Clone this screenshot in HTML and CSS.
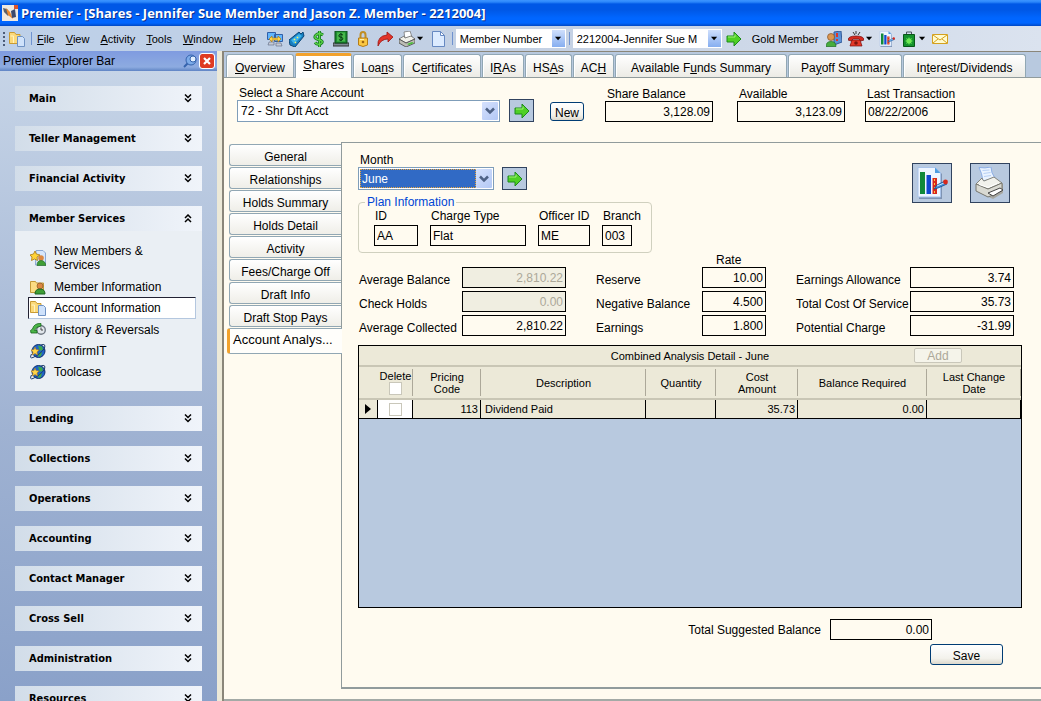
FILE: index.html
```html
<!DOCTYPE html>
<html lang="en">
<head>
    <meta charset="UTF-8">
    <meta name="viewport" content="width=device-width, initial-scale=1.0">
    <title>Premier - [Shares - Jennifer Sue Member and Jason Z. Member - 2212004]</title>
    <link rel="stylesheet" href="styles.css">
</head>
<body>
    <!-- Shared icons -->
    <svg class="defs" width="0" height="0">
        <symbol id="i-arrow" viewBox="0 0 16 16"><path d="M1 5h7V1l7 7-7 7v-4H1z" fill="#4fd024" stroke="#1d8a1a"/><path d="M2 6h7V3.500" fill="none" stroke="#a2f078"/></symbol>
        <symbol id="i-down" viewBox="0 0 8 8"><path d="M0 2h7L3.500 6z"/></symbol>
        <symbol id="i-chev" viewBox="0 0 10 8"><path d="M1 1.500L5 5.500L9 1.500" fill="none" stroke="#4d6185" stroke-width="2.500"/></symbol>
        <symbol id="i-expand" viewBox="0 0 8 9"><path d="M1 .5L4 3.500L7 .5M1 4.500L4 7.500L7 4.500" fill="none" stroke="#000" stroke-width="1.500"/></symbol>
        <symbol id="i-collapse" viewBox="0 0 8 9"><path d="M1 4L4 1L7 4M1 8L4 5L7 8" fill="none" stroke="#000" stroke-width="1.500"/></symbol>
        <symbol id="i-folder" viewBox="0 0 16 16"><path d="M.5 12.500v-11h5l1.500 2h4v9z" fill="#fbd979" stroke="#c99b33"/><path d="M1.500 5h3v7" fill="none" stroke="#fff3c0"/><path d="M8.500 5.500h5l2 2v8h-7z" fill="#cfe2fb" stroke="#6f92c4"/></symbol>
        <symbol id="i-person" viewBox="0 0 16 16"><path d="M.5 13.500v-11h5l1 1.500h7v9.500z" fill="#fbdc83" stroke="#c39a38"/><circle cx="10" cy="7" r="3" fill="#dc8741" stroke="#7b4a20" stroke-width=".6"/><path d="M5 15q0-5 5-5t5 5z" fill="#3f9e36" stroke="#1d6420"/></symbol>
        <symbol id="i-star-person" viewBox="0 0 16 16"><path d="M6 .5h7l2.500 2.500v12H5.500z" fill="#d7e6fb" stroke="#8aa7d4"/><circle cx="11" cy="8" r="2.800" fill="#dc8741"/><path d="M7 15.500q0-5 4-5t5 5z" fill="#3f9e36" stroke="#1d6420" stroke-width=".6"/><path d="M5 1l1.300 3L10 5 7 7l.5 3.500L4.500 9 1.500 10.500 2 7-.2 5 3.500 4z" fill="#ffd338" stroke="#a87713" stroke-width=".8"/></symbol>
        <symbol id="i-history" viewBox="0 0 16 16"><circle cx="11" cy="8" r="4.300" fill="#e1e6eb" stroke="#727a85" stroke-width="1.400"/><path d="M11 5.500V8h2" fill="none" stroke="#444"/><path d="M1 11h6V8.500H4.500Q6 4.500 11 4V1.500Q4 1 2.500 7L.5 8.500z" fill="#4bb447" stroke="#17681d" stroke-width=".8"/></symbol>
        <symbol id="i-globe" viewBox="0 0 16 16"><circle cx="8.500" cy="8" r="6.500" fill="#1f63c8" stroke="#0e2f6e"/><path d="M8 2.500l4 1 1 3-3 1.500-1-2zM9 10l3-1-1 4-3 1z" fill="#3faa49"/><path d="M11 2q5-2 3.500 3Q11 11 3 14.500Q-1 16 1.500 11" fill="none" stroke="#1b3c6b"/><path d="M5 4l1 2.500 3 .5-2 2 .5 3L5 10.500 2.500 12 3 9 1 7l3-.5z" fill="#ffd447" stroke="#a9781c" stroke-width=".6"/></symbol>
        <symbol id="i-chart" viewBox="0 0 32 32"><path d="M3 1h17l6 6v25H3z" fill="#7e93b3"/><path d="M2 .5h17.500l5 5V30H2z" fill="#eef5ff" stroke="#a9c3ea"/><path d="M19 .5v5.500h5.500z" fill="#4e9be0"/><path d="M4 5h5v22H4z" fill="#11893a"/><path d="M10.500 8h4.500v19h-4.500z" fill="#1148d0"/><path d="M16.500 11h4.500v16h-4.500z" fill="#d8281b"/><path d="M18.500 12v15" stroke="#ffc244" stroke-dasharray="2 2"/><path d="M18 22l3-4 8-4 2 3-9 4z" fill="#3d8fdd" stroke="#184b8c" stroke-width=".8"/><path d="M21 19l7-3" stroke="#c6e9ff"/><circle cx="29.500" cy="15" r="2.400" fill="#d8281b"/></symbol>
        <symbol id="i-printer" viewBox="0 0 32 32"><path d="M2 18l4 8 13 6 10-6V17l-8-5z" fill="#a8a8a2"/><path d="M5 .5q6 1 12-.5 0 6 4 11L9 14Q8 6 5 .5z" fill="#eaf3ff" stroke="#8caee6"/><path d="M8.500 3.500l7-.5M9.500 6.500l7-1M10 9.500l7-1" stroke="#b6cff5"/><path d="M2 17l6-6q1 3 2 3l10-4 8 6-14 6z" fill="#f1f1ec" stroke="#84847c"/><path d="M2 17l12 5 14-6v8l-14 6-12-6z" fill="#d9d9d2" stroke="#76766f"/><path d="M5 17.500l9 3 9-4" fill="none" stroke="#fff"/><path d="M14 26l12-5 3 2-10 6z" fill="#fff" stroke="#454545"/></symbol>
    </svg>

    <header class="titlebar">
        <svg class="app-icon" viewBox="0 0 16 16"><path d="M0 0h16v16H0z" fill="#eee9e1"/><path d="M1 3l4 1 3 4-2 3-4-4z" fill="#59606b"/><path d="M4 3l4 4 3 7-5-4z" fill="#f08a2c"/><path d="M9 6l4-2 1 8-4 1z" fill="#3c4a6c"/><path d="M12 0h4v4h-4z" fill="#e0552a"/></svg>
        <h1 class="title">Premier - [Shares - Jennifer Sue Member and Jason Z. Member - 2212004]</h1>
    </header>

    <nav class="toolbar">
        <span class="grip"></span>
        <svg class="icon folder-icon"><use href="#i-folder"/></svg>
        <span class="sep"></span>
        <div class="menu">
            <button class="menu-item"><u>F</u>ile</button>
            <button class="menu-item"><u>V</u>iew</button>
            <button class="menu-item"><u>A</u>ctivity</button>
            <button class="menu-item"><u>T</u>ools</button>
            <button class="menu-item"><u>W</u>indow</button>
            <button class="menu-item"><u>H</u>elp</button>
        </div>
        <div class="tools main-tools">
            <button class="tool" aria-label="Network"><svg class="icon" viewBox="0 0 16 16"><path d="M.5 1.500h8v7h-8zM7.500 3.500h8v7h-8z" fill="#62b5fb" stroke="#315fa8"/><path d="M2 11h5v3H1zM9 12h5l1 3H9z" fill="#c5cbd6" stroke="#5a6780" stroke-width=".6"/><path d="M2 8l3-3v2h6V5l3 3-3 3V9H5v2z" fill="#ffd54a" stroke="#b07c12" stroke-width=".7"/></svg></button>
            <button class="tool" aria-label="Calculator"><svg class="icon" viewBox="0 0 16 16"><path d="M0 9L10 1l2 2 2-2 1 4-9 11-5-2z" fill="#177fc0" stroke="#0c4778"/><path d="M2 9l8-6 3 2-8 8z" fill="#3db4ec"/><path d="M5 8l1 1M8 6l1 1M6 11l1 1" stroke="#f6f266" stroke-width="1.500"/></svg></button>
            <button class="tool" aria-label="Money"><svg class="icon" viewBox="0 0 16 16"><path d="M12 4Q8 1 5 4t2 4.500Q14 10 9.500 13 6 14 4 11.500M8.500 0v16" fill="none" stroke="#177a24" stroke-width="3"/><path d="M12 4Q8 1 5 4t2 4.500Q14 10 9.500 13 6 14 4 11.500M8.500 0v16" fill="none" stroke="#5ed849" stroke-width="1.300"/></svg></button>
            <button class="tool" aria-label="Cash"><svg class="icon" viewBox="0 0 16 16"><path d="M0 12h16v3H0z" fill="#7e8993" stroke="#333"/><path d="M2 0h12v12H2z" fill="#1f8d32" stroke="#0b4b19"/><path d="M4 1.500h8v9H4z" fill="#47b84c"/><path d="M10 4Q7 2 6 4t2 2.300T9 9Q7 10 6 8.500M8 2v8" fill="none" stroke="#063b12"/></svg></button>
            <button class="tool" aria-label="Lock"><svg class="icon" viewBox="0 0 16 16"><path d="M5.500 8V4q0-3 2.500-3t2.500 3v4" fill="none" stroke="#c08e25" stroke-width="2"/><path d="M3.500 7h9v7l-4.500 1.500L3.500 14z" fill="#fbc843" stroke="#b57d18"/><path d="M5 8.500h4" stroke="#fff2ad"/><circle cx="8" cy="11" r="1.300" fill="#9f6510"/></svg></button>
            <button class="tool" aria-label="Forward"><svg class="icon" viewBox="0 0 16 16"><path d="M1 15Q0 5 10 4V1l6 5-5 5V8Q4 8 1 15z" fill="#e2342a" stroke="#9c1512" stroke-width=".8"/></svg></button>
            <button class="tool with-menu" aria-label="Print"><svg class="icon" viewBox="0 0 16 16"><path d="M5 1l6-1 2 6-7 2z" fill="#fff" stroke="#777" stroke-width=".8"/><path d="M0 8l5-3 1 2 6-2 4 3-9 4z" fill="#f0f0ea" stroke="#666" stroke-width=".8"/><path d="M0 8l7 4 9-4v4l-9 4-7-4z" fill="#bdbdb5" stroke="#444" stroke-width=".8"/><path d="M8 13l5-2 2 1-5 2z" fill="#4cc03b"/></svg><svg class="down"><use href="#i-down"/></svg></button>
            <button class="tool" aria-label="New document"><svg class="icon" viewBox="0 0 16 16"><path d="M2.500.5h8l4 4v11h-12z" fill="#dcebff" stroke="#6689c2"/><path d="M10.500.5v4h4z" fill="#fff" stroke="#6689c2"/></svg></button>
        </div>
        <span class="sep"></span>
        <div class="bar-combo search-type">
            <select class="combo-select" aria-label="Search by"><option>Member Number</option></select>
            <span class="bar-arrow"><svg class="down"><use href="#i-down"/></svg></span>
        </div>
        <span class="sep"></span>
        <div class="bar-combo member-pick">
            <select class="combo-select" aria-label="Member"><option>2212004-Jennifer Sue M</option></select>
            <span class="bar-arrow"><svg class="down"><use href="#i-down"/></svg></span>
        </div>
        <button class="tool" aria-label="Go"><svg class="icon"><use href="#i-arrow"/></svg></button>
        <span class="status">Gold Member</span>
        <div class="tools">
            <button class="tool" aria-label="Member notes"><svg class="icon" viewBox="0 0 16 16"><path d="M8 1l7-1 1 11-8 3z" fill="#5d91d7" stroke="#345b98"/><path d="M11 2v4M11 8v2" stroke="#e03528" stroke-width="2"/><circle cx="5" cy="6" r="3.500" fill="#dd9852" stroke="#845225" stroke-width=".7"/><path d="M0 15.500q0-5 5-5t5 5z" fill="#47ad3d" stroke="#1d6b22" stroke-width=".7"/></svg></button>
            <button class="tool with-menu" aria-label="Phone"><svg class="icon" viewBox="0 0 16 16"><path d="M5 1l2 3M8 0v3M12 1l-2 3" stroke="#333"/><path d="M0 9q0-4 8-4t8 4l-3 1-2-2H5l-2 2z" fill="#d52a20" stroke="#760c0c" stroke-width=".7"/><path d="M4 9h8l2 6H2z" fill="#e43829" stroke="#760c0c" stroke-width=".7"/><circle cx="8" cy="12" r="1.800" fill="#7c1610"/></svg><svg class="down"><use href="#i-down"/></svg></button>
            <button class="tool" aria-label="Report"><svg class="icon"><use href="#i-chart"/></svg></button>
            <button class="tool with-menu" aria-label="Shop"><svg class="icon" viewBox="0 0 16 16"><path d="M5.500 5V1h5v4" fill="none" stroke="#4b5660"/><path d="M2.500 3.500h11v12h-11z" fill="#14912d" stroke="#075617"/><path d="M8 6l1 2 2-1-1 2 2 1-2 1 1 2-2-1-1 2-1-2-2 1 1-2-2-1 2-1-1-2 2 1z" fill="#6eea53"/></svg><svg class="down"><use href="#i-down"/></svg></button>
            <button class="tool" aria-label="Mail"><svg class="icon" viewBox="0 0 16 16"><path d="M.5 3.500h15v9H.5z" fill="#fffbd0" stroke="#d5a11e"/><path d="M1 4l7 5 7-5M1 12l5-4M15 12l-5-4" fill="none" stroke="#d5a11e"/></svg></button>
        </div>
    </nav>

    <div class="workspace">
        <aside class="sidebar">
            <div class="sidebar-title">
                <span class="sidebar-name">Premier Explorer Bar</span>
                <button class="mini" aria-label="Pin"><svg class="pin" viewBox="0 0 14 14"><path d="M1 13l5-5" stroke="#3563ad" stroke-width="2"/><circle cx="8" cy="6" r="5" fill="#7cabe9" stroke="#3563ad"/><circle cx="10" cy="5" r="3" fill="#e3f0ff" stroke="#3563ad"/></svg></button>
                <button class="mini close" aria-label="Close"><svg class="pin" viewBox="0 0 14 14"><path d="M4 4l6 6M10 4l-6 6" stroke="#fff" stroke-width="2.200"/></svg></button>
            </div>
            <div class="groups">
                <section class="group"><button class="group-head">Main<svg class="toggle"><use href="#i-expand"/></svg></button></section>
                <section class="group"><button class="group-head">Teller Management<svg class="toggle"><use href="#i-expand"/></svg></button></section>
                <section class="group"><button class="group-head">Financial Activity<svg class="toggle"><use href="#i-expand"/></svg></button></section>
                <section class="group">
                    <button class="group-head">Member Services<svg class="toggle"><use href="#i-collapse"/></svg></button>
                    <div class="links">
                        <a class="link tall" href="#"><svg class="icon"><use href="#i-star-person"/></svg><span class="link-text">New Members &amp; Services</span></a>
                        <a class="link" href="#"><svg class="icon"><use href="#i-person"/></svg>Member Information</a>
                        <a class="link current" href="#"><svg class="icon"><use href="#i-folder"/></svg>Account Information</a>
                        <a class="link" href="#"><svg class="icon"><use href="#i-history"/></svg>History &amp; Reversals</a>
                        <a class="link" href="#"><svg class="icon"><use href="#i-globe"/></svg>ConfirmIT</a>
                        <a class="link" href="#"><svg class="icon"><use href="#i-globe"/></svg>Toolcase</a>
                    </div>
                </section>
                <section class="group"><button class="group-head">Lending<svg class="toggle"><use href="#i-expand"/></svg></button></section>
                <section class="group"><button class="group-head">Collections<svg class="toggle"><use href="#i-expand"/></svg></button></section>
                <section class="group"><button class="group-head">Operations<svg class="toggle"><use href="#i-expand"/></svg></button></section>
                <section class="group"><button class="group-head">Accounting<svg class="toggle"><use href="#i-expand"/></svg></button></section>
                <section class="group"><button class="group-head">Contact Manager<svg class="toggle"><use href="#i-expand"/></svg></button></section>
                <section class="group"><button class="group-head">Cross Sell<svg class="toggle"><use href="#i-expand"/></svg></button></section>
                <section class="group"><button class="group-head">Administration<svg class="toggle"><use href="#i-expand"/></svg></button></section>
                <section class="group"><button class="group-head">Resources<svg class="toggle"><use href="#i-expand"/></svg></button></section>
            </div>
        </aside>

        <main class="main">
            <div class="tabs">
                <button class="tab"><span><u>O</u>verview</span></button>
                <button class="tab active"><span><u>S</u>hares</span></button>
                <button class="tab short"><span>Loa<u>n</u>s</span></button>
                <button class="tab"><span>C<u>e</u>rtificates</span></button>
                <button class="tab short"><span>I<u>R</u>As</span></button>
                <button class="tab short"><span>HS<u>A</u>s</span></button>
                <button class="tab short"><span>AC<u>H</u></span></button>
                <button class="tab wide"><span>Available F<u>u</u>nds Summary</span></button>
                <button class="tab long"><span>Pa<u>y</u>off Summary</span></button>
                <button class="tab long"><span>In<u>t</u>erest/Dividends</span></button>
            </div>

            <div class="page">
                <div class="account-row">
                    <div class="account-field">
                        <label for="account">Select a Share Account</label>
                        <div class="combo">
                            <select class="combo-select" id="account"><option>72 - Shr Dft Acct</option></select>
                            <span class="combo-arrow"><svg class="chev"><use href="#i-chev"/></svg></span>
                        </div>
                    </div>
                    <button class="go" aria-label="Load account"><svg class="icon"><use href="#i-arrow"/></svg></button>
                    <button class="button new-button">New</button>
                    <div class="amount-field">
                        <label for="shareBalance">Share Balance</label>
                        <input class="box num" id="shareBalance" value="3,128.09" readonly>
                    </div>
                    <div class="amount-field">
                        <label for="available">Available</label>
                        <input class="box num" id="available" value="3,123.09" readonly>
                    </div>
                    <div class="date-field">
                        <label for="lastTransaction">Last Transaction</label>
                        <input class="box" id="lastTransaction" value="08/22/2006" readonly>
                    </div>
                </div>

                <div class="detail">
                    <div class="side-tabs">
                        <button class="side-tab">General</button>
                        <button class="side-tab">Relationships</button>
                        <button class="side-tab">Holds Summary</button>
                        <button class="side-tab">Holds Detail</button>
                        <button class="side-tab">Activity</button>
                        <button class="side-tab">Fees/Charge Off</button>
                        <button class="side-tab">Draft Info</button>
                        <button class="side-tab">Draft Stop Pays</button>
                        <button class="side-tab active">Account Analys...</button>
                    </div>

                    <div class="panel">
                        <div class="panel-top">
                            <div class="month-field">
                                <label for="month">Month</label>
                                <div class="month-row">
                                    <div class="combo focused">
                                        <select class="combo-select" id="month"><option>June</option></select>
                                        <span class="combo-arrow"><svg class="chev"><use href="#i-chev"/></svg></span>
                                    </div>
                                    <button class="go" aria-label="Load month"><svg class="icon"><use href="#i-arrow"/></svg></button>
                                </div>
                            </div>
                            <div class="actions">
                                <button class="big" aria-label="Edit report"><svg class="big-icon"><use href="#i-chart"/></svg></button>
                                <button class="big" aria-label="Print"><svg class="big-icon"><use href="#i-printer"/></svg></button>
                            </div>
                        </div>

                        <fieldset class="plan">
                            <legend>Plan Information</legend>
                            <div class="plan-fields">
                                <label for="planId">ID</label>
                                <label for="chargeType">Charge Type</label>
                                <label for="officer">Officer ID</label>
                                <label for="branch">Branch</label>
                                <input class="box" id="planId" value="AA" readonly>
                                <input class="box" id="chargeType" value="Flat" readonly>
                                <input class="box" id="officer" value="ME" readonly>
                                <input class="box" id="branch" value="003" readonly>
                            </div>
                        </fieldset>

                        <div class="figures">
                            <div class="figure-group averages">
                                <label for="avgBalance">Average Balance</label>
                                <input class="box num" id="avgBalance" value="2,810.22" disabled>
                                <label for="checkHolds">Check Holds</label>
                                <input class="box num" id="checkHolds" value="0.00" disabled>
                                <label for="avgCollected">Average Collected</label>
                                <input class="box num" id="avgCollected" value="2,810.22" readonly>
                            </div>
                            <div class="figure-group rates">
                                <span class="rate-title">Rate</span>
                                <label for="reserve">Reserve</label>
                                <input class="box num" id="reserve" value="10.00" readonly>
                                <label for="negative">Negative Balance</label>
                                <input class="box num" id="negative" value="4.500" readonly>
                                <label for="earnings">Earnings</label>
                                <input class="box num" id="earnings" value="1.800" readonly>
                            </div>
                            <div class="figure-group charges">
                                <label for="allowance">Earnings Allowance</label>
                                <input class="box num" id="allowance" value="3.74" readonly>
                                <label for="cost">Total Cost Of Service</label>
                                <input class="box num" id="cost" value="35.73" readonly>
                                <label for="potential">Potential Charge</label>
                                <input class="box num" id="potential" value="-31.99" readonly>
                            </div>
                        </div>

                        <div class="grid">
                            <div class="grid-title">
                                <span class="grid-name">Combined Analysis Detail - June</span>
                                <button class="add-button" disabled>Add</button>
                            </div>
                            <table class="analysis">
                                <colgroup>
                                    <col class="c-mark"><col class="c-delete"><col class="c-code"><col class="c-desc"><col class="c-qty"><col class="c-cost"><col class="c-bal"><col class="c-date">
                                </colgroup>
                                <thead>
                                    <tr>
                                        <th class="no-line"></th>
                                        <th><label for="deleteAll">Delete</label><input class="check" type="checkbox" id="deleteAll"></th>
                                        <th>Pricing Code</th>
                                        <th>Description</th>
                                        <th>Quantity</th>
                                        <th>Cost<br>Amount</th>
                                        <th>Balance Required</th>
                                        <th>Last Change Date</th>
                                    </tr>
                                </thead>
                                <tbody>
                                    <tr>
                                        <td class="mark"><svg class="marker" viewBox="0 0 6 10"><path d="M0 0l6 5-6 5z"/></svg></td>
                                        <td class="tick"><input class="check" type="checkbox" aria-label="Delete row"></td>
                                        <td class="num">113</td>
                                        <td>Dividend Paid</td>
                                        <td></td>
                                        <td class="num">35.73</td>
                                        <td class="num">0.00</td>
                                        <td></td>
                                    </tr>
                                </tbody>
                            </table>
                        </div>

                        <div class="total-row">
                            <label for="total">Total Suggested Balance</label>
                            <input class="box num" id="total" value="0.00" readonly>
                        </div>
                        <div class="save-row">
                            <button class="button save-button">Save</button>
                        </div>
                    </div>
                </div>
            </div>
        </main>
    </div>
</body>
</html>
```
FILE: styles.css
```css
* {
    box-sizing: border-box;
}
body {
    display: flex;
    flex-direction: column;
    height: 100vh;
    margin: 0;
    overflow: hidden;
    font-family: "Liberation Sans", Arial, sans-serif;
    font-size: 12px;
    line-height: 14px;
    color: #000;
    background-color: #fffbf0;
}
button, input, select {
    font: inherit;
    color: inherit;
    margin: 0;
    padding: 0;
    border: none;
    border-radius: 0;
    background: none;
}
.defs {
    position: absolute;
}
.icon {
    display: block;
    width: 16px;
    height: 16px;
    flex: none;
}

/* Title bar */
.titlebar {
    display: flex;
    align-items: center;
    flex: none;
    gap: 3px;
    height: 26px;
    padding-left: 2px;
    background: linear-gradient(#3d95ff 0, #2b87fb 2px, #0058e6 4px, #0058e6 10px, #0066ff 18px, #0066ff 23px, #0048c4 26px);
}
.app-icon {
    width: 16px;
    height: 16px;
}
.title {
    margin: 0;
    font-family: "Open Sans", sans-serif;
    font-size: 13px;
    font-weight: bold;
    line-height: 20px;
    color: #fff;
    text-shadow: 1px 1px 0 #0a2f8c;
    white-space: nowrap;
}

/* Menu and tool bar */
.toolbar {
    display: flex;
    align-items: center;
    flex: none;
    height: 25px;
    padding-left: 3px;
    font-size: 11px;
    white-space: nowrap;
    background: linear-gradient(90deg, #bdd0e9, #c3d0e3 50%, #dbe3ef);
}
.grip {
    width: 2px;
    height: 14px;
    background: repeating-linear-gradient(#4d5d79 0, #4d5d79 2px, transparent 2px, transparent 4px);
}
.folder-icon {
    margin: 0 3px 0 4px;
}
.sep {
    width: 1px;
    height: 13px;
    margin: 0 3px;
    background-color: #6f92cf;
}
.menu {
    display: flex;
    gap: 11px;
    margin: 0 11px 0 2px;
}
.tools {
    display: flex;
    gap: 6px;
}
.main-tools {
    margin-right: 3px;
}
.with-menu {
    display: flex;
    align-items: center;
    gap: 2px;
}
.down {
    display: block;
    width: 7px;
    height: 7px;
}
.bar-combo, .combo {
    display: grid;
    align-items: center;
    background-color: #fff;
}
.bar-combo {
    height: 19px;
    padding: 1px;
}
.combo-select {
    grid-area: 1 / 1;
    width: 100%;
    appearance: none;
    outline: none;
}
.bar-combo .combo-select {
    padding-left: 3px;
}
.search-type {
    width: 110px;
}
.member-pick {
    width: 149px;
    margin-right: 4px;
}
.bar-arrow, .combo-arrow {
    grid-area: 1 / 1;
    justify-self: end;
    display: grid;
    place-items: center;
    height: 100%;
    pointer-events: none;
}
.bar-arrow {
    width: 13px;
    background: linear-gradient(#cfdffc, #86aef0);
}
.status {
    margin: 0 8px 0 10px;
}

/* Explorer bar */
.workspace {
    display: flex;
    flex: 1;
    min-height: 0;
}
.sidebar {
    flex: none;
    width: 217px;
    overflow: hidden;
    background: linear-gradient(#c8d6e8, #9fb2d2 380px, #8aa1c9);
}
.sidebar-title {
    display: flex;
    align-items: center;
    height: 20px;
    padding: 0 3px;
    background: linear-gradient(#7f9be0, #8dabe0 16px, #5f84c4);
}
.sidebar-name {
    flex: 1;
}
.mini {
    width: 14px;
    height: 14px;
    margin-left: 3px;
}
.close {
    border-radius: 2px;
    background-color: #df3b22;
    outline: 1px solid #fff;
}
.pin {
    display: block;
}
.groups {
    display: flex;
    flex-direction: column;
    gap: 15px;
    padding: 15px;
}
.group-head {
    display: flex;
    align-items: center;
    justify-content: space-between;
    width: 100%;
    height: 25px;
    padding: 0 10px 0 14px;
    font-family: "DejaVu Sans Condensed", "DejaVu Sans", sans-serif;
    font-size: 11px;
    font-weight: bold;
    background: linear-gradient(90deg, #d2dde9, #f0f4fa);
}
.toggle {
    width: 8px;
    height: 9px;
}
.links {
    padding: 13px 6px 9px 13px;
    background-color: #eaeff4;
}
.link {
    display: flex;
    align-items: center;
    gap: 8px;
    height: 21px;
    padding-left: 2px;
    color: #000;
    text-decoration: none;
}
.tall {
    height: 32px;
    padding-bottom: 4px;
}
.link-text {
    width: 110px;
}
.current {
    height: 22px;
    padding-left: 1px;
    border: 1px solid #b4c7df;
    border-top-color: #223;
    border-left-color: #223;
    background-color: #fff;
}

/* Top tabs */
.main {
    display: flex;
    flex: 1;
    flex-direction: column;
    min-width: 0;
    margin-left: 5px;
    border-top: 1px solid #8a867a;
    border-left: 2px solid #8a867a;
    background-color: #b8c9df;
    box-shadow: -5px 0 0 #ece9d8;
}
.tabs {
    display: flex;
    flex: none;
    align-items: flex-end;
    gap: 1px;
    height: 26px;
    padding-left: 2px;
    border-bottom: 1px solid #919b9c;
}
.tab {
    height: 23px;
    padding: 4px 8px 0;
    white-space: nowrap;
    border: 1px solid #91a7b4;
    border-bottom: none;
    border-radius: 3px 3px 0 0;
    background: linear-gradient(#fff, #ecebe5);
    box-shadow: inset 1px 1px 0 #fff;
}
.tab.active {
    height: 25px;
    padding: 0 7px 4px;
    margin-bottom: -1px;
    font-size: 13px;
    border-top: 3px solid #f2a22c;
    background: #fffefb;
}
.tab.short {
    padding: 4px 7px 0;
}
.tab.long {
    padding: 4px 12px 0;
}
.tab.wide {
    padding: 4px 15px 0;
}

/* Account row */
.page {
    display: flex;
    flex: 1;
    flex-direction: column;
    min-height: 0;
    padding-bottom: 10px;
    border-bottom: 2px solid #a3aaa6;
    background-color: #fffbf0;
}
.account-row {
    display: flex;
    align-items: flex-end;
    height: 44px;
    margin-bottom: 20px;
    padding-left: 13px;
}
.account-row label {
    display: block;
    margin: 0 2px;
    white-space: nowrap;
}
.account-field {
    width: 263px;
    margin-right: 9px;
}
.combo {
    height: 22px;
    padding: 1px;
    border: 1px solid #7f9db9;
}
.combo .combo-select {
    padding-left: 2px;
}
.combo-arrow {
    width: 16px;
    background: linear-gradient(135deg, #d5e1fd, #b3c8f5);
    border-radius: 1px;
}
.chev {
    width: 10px;
    height: 8px;
}
.go {
    display: grid;
    place-items: center;
    width: 25px;
    height: 23px;
    border: 1px solid #31435f;
    background-color: #b8c9df;
}
.button {
    padding-top: 2px;
    border: 1px solid #003c74;
    border-radius: 3px;
    background: linear-gradient(#fff, #f3f2ec 70%, #dcd8cc);
}
.new-button {
    width: 34px;
    height: 19px;
    margin: 0 21px 1px 16px;
}
.box {
    width: 100%;
    height: 21px;
    padding: 0 2px;
    border: 1px solid #000;
    outline: none;
    background-color: #fffbf0;
}
.num {
    text-align: right;
}
.amount-field {
    width: 108px;
    margin-right: 24px;
}
.amount-field + .date-field {
    width: 90px;
    margin-left: -4px;
}

/* Side tabs and panel */
.detail {
    display: flex;
    flex: 1;
    min-height: 0;
    padding-left: 3px;
}
.side-tabs {
    display: flex;
    flex-direction: column;
    flex: none;
    gap: 1px;
    width: 114px;
    padding: 2px 0 0 2px;
}
.side-tab {
    height: 22px;
    padding-top: 3px;
    border: 1px solid #91a7b4;
    border-right: none;
    border-radius: 3px 0 0 3px;
    background: linear-gradient(#fff, #efeee8);
}
.side-tab.active {
    z-index: 1;
    height: 26px;
    margin: 0 -1px 0 -2px;
    padding: 0 3px 2px;
    font-size: 13px;
    text-align: left;
    white-space: nowrap;
    border-left: 3px solid #f2a22c;
    background: #fffefb;
}
.panel {
    display: flex;
    flex: 1;
    flex-direction: column;
    min-width: 0;
    padding: 10px 19px 22px 16px;
    border: 1px solid #919b9c;
    border-width: 1px 0 2px 1px;
}
.panel-top {
    display: flex;
    justify-content: space-between;
}
.month-field label {
    display: block;
    margin-left: 2px;
}
.month-row {
    display: flex;
    gap: 8px;
}
.focused {
    width: 136px;
    height: 23px;
}
.focused .combo-select {
    width: 116px;
    height: 19px;
    padding-left: 1px;
    color: #fff;
    border: 1px dotted #e9a53c;
    background-color: #316ac5;
}
.actions {
    display: flex;
    gap: 18px;
    padding: 10px 12px 0 0;
}
.big {
    display: grid;
    place-items: center;
    width: 40px;
    height: 40px;
    border: 1px solid #31435f;
    background-color: #b8c9df;
}
.big-icon {
    width: 32px;
    height: 32px;
}
.plan {
    align-self: flex-start;
    margin: -8px 0 0;
    padding: 0 19px 6px 15px;
    border: 1px solid #d0d0bf;
    border-radius: 4px;
}
.plan legend {
    margin-left: -9px;
    padding: 0 2px;
    color: #0046d5;
}
.plan-fields {
    display: grid;
    grid-template-columns: 44px 96px 52px 30px;
    column-gap: 12px;
    row-gap: 2px;
}
.plan-fields label {
    margin-left: 1px;
    white-space: nowrap;
}

/* Balances */
.figures {
    display: flex;
    align-items: flex-end;
    gap: 30px;
}
.figure-group {
    display: grid;
    row-gap: 3px;
    align-items: end;
}
.figure-group label {
    padding-bottom: 1px;
    white-space: nowrap;
}
.averages {
    grid-template-columns: 104px 104px;
}
.averages label {
    padding-left: 1px;
}
.rates {
    grid-template-columns: 106px 64px;
}
.charges {
    grid-template-columns: 114px 104px;
}
.rate-title {
    grid-column: 2;
    margin: 0 0 -3px 14px;
}
.box:disabled {
    color: #aca899;
    background-color: #f0eee1;
}

/* Analysis grid */
.grid {
    flex: 1;
    min-height: 100px;
    margin-top: 9px;
    font-size: 11px;
    line-height: 12px;
    border: 1px solid #000;
    background-color: #b8c9df;
}
.grid-title {
    display: grid;
    grid-template-columns: 1fr auto 1fr;
    align-items: center;
    height: 21px;
    border-bottom: 2px solid #c9c6b5;
    background-color: #ece9d8;
}
.grid-name {
    grid-column: 2;
}
.add-button {
    justify-self: end;
    width: 48px;
    height: 15px;
    margin-right: 59px;
    font-size: 12px;
    color: #aca899;
    border: 1px solid #c9c7ba;
    border-radius: 2px;
    background-color: #f5f4ea;
}
.analysis {
    width: 100%;
    table-layout: fixed;
    border-collapse: separate;
    border-spacing: 0;
}
.c-mark {
    width: 19px;
}
.c-delete {
    width: 35px;
}
.c-code {
    width: 68px;
}
.c-qty {
    width: 70px;
}
.c-cost {
    width: 82px;
}
.c-bal {
    width: 129px;
}
.c-date {
    width: 94px;
}
.analysis th {
    height: 33px;
    padding: 0 12px;
    font-weight: normal;
    border-bottom: 2px solid #c9c6b5;
    background: linear-gradient(#aca899, #aca899) right center / 1px 27px no-repeat #ece9d8;
}
.analysis th:nth-child(2) {
    padding: 0;
}
.analysis th.no-line {
    background: #ece9d8;
}
.check {
    display: block;
    width: 13px;
    height: 13px;
    margin: 0 auto;
    appearance: none;
    border: 1px solid #c9c7ba;
    background-color: #fff;
}
.analysis td {
    height: 19px;
    padding: 0 2px 0 4px;
    border-right: 1px solid #000;
    border-bottom: 1px solid #000;
    background-color: #ece9d8;
}
.analysis td.tick {
    padding: 0;
    background-color: #fff;
}
.analysis td.mark {
    padding: 0 6px;
}
.marker {
    display: block;
    width: 6px;
    height: 10px;
}

/* Footer */
.total-row {
    display: flex;
    align-items: center;
    justify-content: flex-end;
    gap: 9px;
    margin: 11px 90px 4px 0;
}
.total-row .box {
    width: 102px;
}
.save-row {
    display: flex;
    justify-content: flex-end;
    margin-right: 19px;
}
.save-button {
    width: 73px;
    height: 21px;
}
```
